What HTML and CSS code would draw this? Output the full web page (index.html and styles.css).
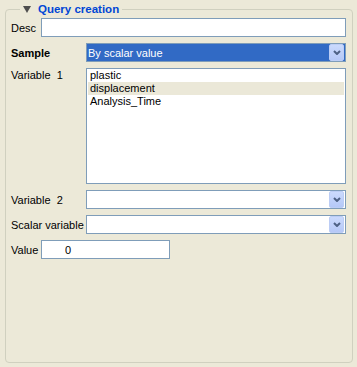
FILE: index.html
```html
<!DOCTYPE html>
<html lang="en">
<head>
  <meta charset="UTF-8">
  <title>Query creation</title>
  <link rel="stylesheet" href="styles.css">
</head>
<body>
  <fieldset class="group">
    <legend class="group-title"><svg class="twisty" width="8" height="7" viewBox="0 0 8 7"><polygon points="0,0 8,0 4,7" fill="#4e4e4e"/></svg>Query creation</legend>

    <div class="row">
      <label class="lbl lbl-short">Desc</label>
      <input class="field" type="text">
    </div>

    <div class="row">
      <label class="lbl lbl-long bold">Sample</label>
      <div class="combo combo-active">
        <span class="combo-text">By scalar value</span>
        <span class="combo-btn"><svg width="8" height="5" viewBox="0 0 8 5"><polyline points="1,1 4,4 7,1" fill="none" stroke="#4d6185" stroke-width="2"/></svg></span>
      </div>
    </div>

    <div class="row row-top">
      <label class="lbl lbl-long lbl-list">Variable&nbsp; 1</label>
      <ul class="listbox">
        <li>plastic</li>
        <li class="sel">displacement</li>
        <li>Analysis_Time</li>
      </ul>
    </div>

    <div class="row">
      <label class="lbl lbl-long">Variable&nbsp; 2</label>
      <div class="combo">
        <span class="combo-text"></span>
        <span class="combo-btn"><svg width="8" height="5" viewBox="0 0 8 5"><polyline points="1,1 4,4 7,1" fill="none" stroke="#4d6185" stroke-width="2"/></svg></span>
      </div>
    </div>

    <div class="row">
      <label class="lbl lbl-long">Scalar variable</label>
      <div class="combo">
        <span class="combo-text"></span>
        <span class="combo-btn"><svg width="8" height="5" viewBox="0 0 8 5"><polyline points="1,1 4,4 7,1" fill="none" stroke="#4d6185" stroke-width="2"/></svg></span>
      </div>
    </div>

    <div class="row">
      <label class="lbl lbl-short">Value</label>
      <input class="field field-value" type="text" value="0">
    </div>
  </fieldset>
</body>
</html>
```

FILE: styles.css
```css
body {
  margin: 0;
  background: #ece9d8;
  font-family: "Liberation Sans", Arial, sans-serif;
  font-size: 11px;
  color: #000;
}

.group {
  box-sizing: border-box;
  margin: 2px 4px 0 5px;
  height: 361px;
  padding: 2px 6px 0 5px;
  border: 1px solid #d0d0bf;
  border-radius: 4px;
  display: flex;
  flex-direction: column;
  gap: 6px;
}

.group-title {
  margin-left: 9px;
  padding: 0 3px;
  line-height: 14px;
  font-weight: bold;
  font-size: 11.5px;
  color: #0046d5;
}
.twisty {
  margin-right: 7px;
  vertical-align: 0;
}

.row {
  display: flex;
  align-items: center;
  height: 19px;
}
.row-top {
  align-items: flex-start;
  height: 116px;
}

.lbl {
  flex: none;
}
.lbl-short {
  width: 30px;
}
.lbl-long {
  width: 75px;
}
.lbl-list {
  padding-top: 1px;
}
.bold {
  font-weight: bold;
}

.field {
  box-sizing: border-box;
  flex: 1;
  height: 19px;
  margin: 0;
  padding: 0 3px;
  border: 1px solid #7f9db9;
  background: #fff;
  font: inherit;
  outline: none;
}
.field-value {
  flex: none;
  width: 129px;
  padding-left: 23px;
}

.combo {
  box-sizing: border-box;
  flex: 1;
  height: 19px;
  display: flex;
  align-items: center;
  border: 1px solid #7f9db9;
  background: #fff;
}
.combo-active {
  background: #316ac5;
  color: #fff;
}
.combo-text {
  flex: 1;
  padding-left: 1px;
}
.combo-btn {
  box-sizing: border-box;
  width: 15px;
  height: 17px;
  margin-right: 1px;
  display: flex;
  align-items: center;
  justify-content: center;
  border: 1px solid #bccdf5;
  border-radius: 2px;
  background: linear-gradient(#cbdafd, #b5c8f7);
}

.listbox {
  box-sizing: border-box;
  flex: 1;
  height: 116px;
  margin: 0;
  padding: 0 1px;
  list-style: none;
  border: 1px solid #7f9db9;
  background: #fff;
}
.listbox li {
  height: 13px;
  line-height: 13px;
  padding-left: 2px;
}
.listbox li.sel {
  background: #ebe8d8;
}
```
